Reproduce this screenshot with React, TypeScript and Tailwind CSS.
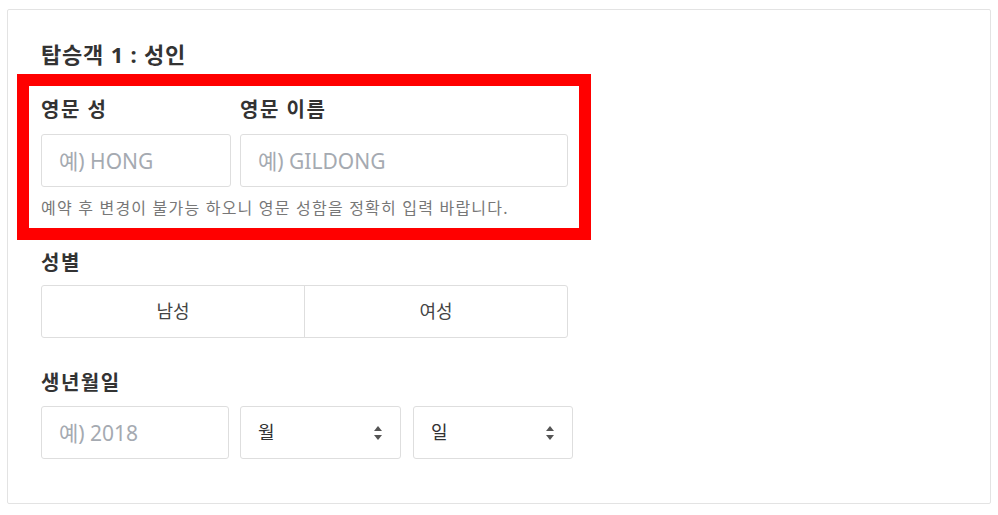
const font = { fontFamily: '"Malgun Gothic", "Noto Sans", "Noto Sans CJK KR", sans-serif' };

function SelectBox({ label, width }: { label: string; width: string }) {
  return (
    <div className={`${width} h-[53px] border border-[#dedede] rounded-[3px] flex items-center justify-between pl-[17px] pr-[17px] text-[18px] text-[#333] bg-white`}>
      <span>{label}</span>
      <svg width="10" height="20" viewBox="0 0 10 20" className="text-[#555]">
        <path d="M1 8 L5 3 L9 8 Z" fill="currentColor" />
        <path d="M1 12 L5 17 L9 12 Z" fill="currentColor" />
      </svg>
    </div>
  );
}

export default function App() {
  return (
    <div className="w-[998px] h-[515px] bg-white pt-[9px] pl-[7px]" style={font}>
      <div className="w-[984px] h-[495px] border border-[#e3e3e3] rounded-[2px] pt-[30px] pl-[33px]">
        <h2 className="text-[22px] leading-[28px] font-bold tracking-[0.8px] text-[#333]">탑승객 1 : 성인</h2>

        <div className="mt-[6px] -ml-[24px] w-[574px] border-[12px] border-[#ff0000] pt-[12px] pl-[12px] pb-[10px]">
          <div className="flex gap-[9px]">
            <div className="w-[190px]">
              <div className="text-[20px] leading-[24px] font-bold tracking-[1.5px] text-[#333]">영문 성</div>
              <input
                className="mt-[12px] w-[190px] h-[53px] border border-[#dedede] rounded-[3px] pl-[17px] text-[21px] placeholder:text-[#a5aab1] outline-none"
                placeholder="예) HONG"
              />
            </div>
            <div className="w-[328px]">
              <div className="text-[20px] leading-[24px] font-bold tracking-[1.5px] text-[#333]">영문 이름</div>
              <input
                className="mt-[12px] w-[328px] h-[53px] border border-[#dedede] rounded-[3px] pl-[17px] text-[21px] placeholder:text-[#a5aab1] outline-none"
                placeholder="예) GILDONG"
              />
            </div>
          </div>
          <p className="mt-[11px] text-[16px] leading-[20px] tracking-[1.2px] text-[#777]">
            예약 후 변경이 불가능 하오니 영문 성함을 정확히 입력 바랍니다.
          </p>
        </div>

        <div className="mt-[11px] text-[20px] leading-[24px] font-bold tracking-[1.5px] text-[#333]">성별</div>
        <div className="mt-[10px] w-[527px] h-[53px] border border-[#dedede] rounded-[3px] flex text-[18px] text-[#444]">
          <button className="w-[263px] h-full flex items-center justify-center border-r border-[#dedede]">남성</button>
          <button className="flex-1 h-full flex items-center justify-center">여성</button>
        </div>

        <div className="mt-[33px] text-[20px] leading-[24px] font-bold tracking-[1.5px] text-[#333]">생년월일</div>
        <div className="mt-[11px] flex">
          <input
            className="w-[188px] h-[53px] border border-[#dedede] rounded-[3px] pl-[17px] text-[21px] placeholder:text-[#a5aab1] outline-none"
            placeholder="예) 2018"
          />
          <div className="ml-[11px]">
            <SelectBox label="월" width="w-[161px]" />
          </div>
          <div className="ml-[12px]">
            <SelectBox label="일" width="w-[160px]" />
          </div>
        </div>
      </div>
    </div>
  );
}
